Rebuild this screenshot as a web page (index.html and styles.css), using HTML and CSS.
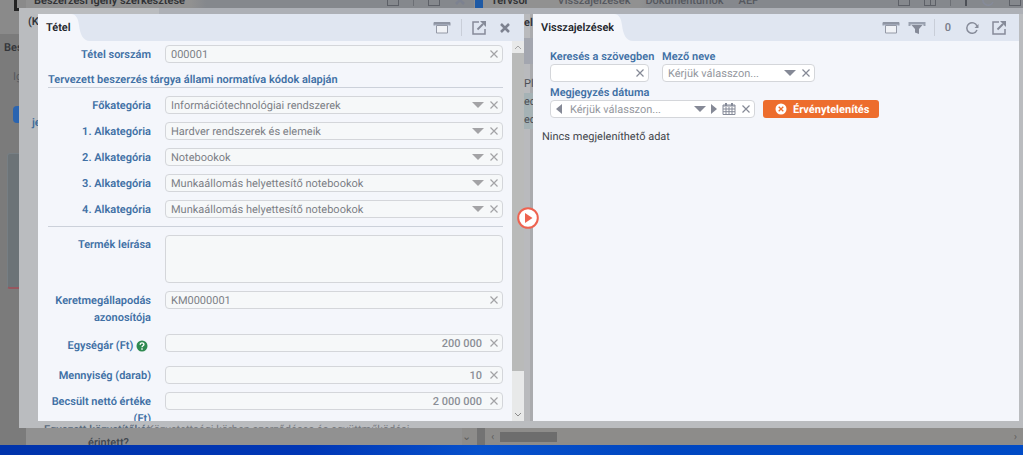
FILE: index.html
```html
<!DOCTYPE html>
<html lang="hu">
<head>
<meta charset="utf-8">
<meta name="viewport" content="width=device-width, initial-scale=1">
<title>Tétel – Visszajelzések</title>
<link rel="stylesheet" href="styles.css">
</head>
<body>
<svg class="sprite" aria-hidden="true">
  <symbol id="i-archive" viewBox="0 0 18 14"><path d="M1 4.500V1.500h16v3" fill="#b3bccd" stroke="#8f95a3"/><path d="M3.500 4.500h11v7.500h-11z" fill="#f0f2f6" stroke="#9499a6"/><path d="M1 2.500h16" stroke="#8f95a3" stroke-width="2"/></symbol>
  <symbol id="i-filter" viewBox="0 0 18 14"><path d="M.500 1h17v4h-2v-1.500h-13v1.500h-2z" fill="#9aa1b0"/><path d="M3.500 4h11L11 8v5l-4-1.500V8z" fill="#858a98"/></symbol>
  <symbol id="i-open" viewBox="0 0 16 16"><path d="M8 2H2v12h12V9" fill="none" stroke="#868b99" stroke-width="1.500"/><path d="M6.500 9.500 12 4" fill="none" stroke="#868b99" stroke-width="2"/><path d="M9 1h6v6z" fill="#868b99"/></symbol>
  <symbol id="i-close" viewBox="0 0 12 12"><path d="m2 2 8 8M10 2l-8 8" stroke="#7d8290" stroke-width="2.500"/></symbol>
  <symbol id="i-x" viewBox="0 0 10 10"><path d="m1.500 1.500 7 7m0-7-7 7" stroke="currentColor" stroke-width="1.200"/></symbol>
  <symbol id="i-down" viewBox="0 0 12 6"><path d="M0 0h12L6 6z" fill="currentColor"/></symbol>
  <symbol id="i-left" viewBox="0 0 6 10"><path d="M6 0v10L0 5z" fill="currentColor"/></symbol>
  <symbol id="i-right" viewBox="0 0 6 10"><path d="M0 0v10l6-5z" fill="currentColor"/></symbol>
  <symbol id="i-calendar" viewBox="0 0 14 12"><path d="M1 2h12v9.500H1z" fill="none" stroke="#858a98"/><path d="M1 3h12M1 6h12M1 8.700h12M4 4v7M7 4v7M10 4v7" stroke="#858a98"/><path d="M4 0v3m6-3v3" stroke="#858a98" stroke-width="2"/></symbol>
  <symbol id="i-refresh" viewBox="0 0 14 14"><path d="M12 9a5.300 5.300 0 1 1 0-4" fill="none" stroke="#868b99" stroke-width="1.500"/><path d="M13.500 3v4h-4z" fill="#868b99"/></symbol>
  <symbol id="i-tab" viewBox="0 0 24 27" preserveAspectRatio="none"><path d="M0 0c5 0 7 4 8 11 1 9 4 16 11 16H0z" fill="#f4f6fb"/></symbol>
</svg>
<div class="screen">
  <main class="desktop">
    <div class="backdrop" aria-hidden="true">
      <div class="back-strip">
        <span class="back-title">Beszerzési igény szerkesztése</span>
        <span class="back-tools"><i class="box"></i><i class="bar"></i><i class="box"></i><svg class="ic12"><use href="#i-close"/></svg></span>
      </div>
      <div class="back-strip back-strip-right">
        <i class="mark"></i><span class="back-title">Tervsor</span><span class="back-tab">Visszajelzések</span><span class="back-tab">Dokumentumok</span><span class="back-tab">AEF</span>
        <span class="back-tools"><i class="box"></i><i class="box grid"></i><i class="bar"></i><i class="bar dark"></i><svg class="ic14"><use href="#i-refresh"/></svg><i class="box"></i></span>
      </div>
      <div class="back-side"><b class="logo"></b><span class="side-label">Beszerzés</span><span class="side-field">Ig</span><i class="side-button"></i><i class="side-card"></i></div>
      <div class="back-form"><span class="back-question">érintett?</span></div>
      <div class="back-scroll"><i class="arrow-down">⌄</i><i class="split"></i><i>‹</i><b></b><i class="arrow-end">›</i></div>
    </div>
    <div class="shade" aria-hidden="true"><i class="shade-tab"></i><span class="shade-k">(K</span><span class="shade-je">je</span><span class="shade-cut">Egyezett közvetítőkér</span><span class="shade-field">Közvetettségi körben szerződéses és együttműködési</span></div>

    <div class="dialogs">
      <section class="panel">
        <header class="head">
          <h1 class="tab">Tétel</h1><svg class="curve" aria-hidden="true"><use href="#i-tab"/></svg>
          <div class="tools tools-item">
            <button type="button" aria-label="Archívum"><svg class="wide"><use href="#i-archive"/></svg></button>
            <i class="divider"></i>
            <button type="button" aria-label="Új ablak"><svg class="ic16"><use href="#i-open"/></svg></button>
            <button type="button" aria-label="Bezárás"><svg class="ic12"><use href="#i-close"/></svg></button>
          </div>
        </header>
        <div class="content">
          <form class="form">
            <div class="row"><label for="no">Tétel sorszám</label><div class="field"><input id="no" value="000001"><button type="button" aria-label="Törlés"><svg class="ic10"><use href="#i-x"/></svg></button></div></div>
            <h2 class="group">Tervezett beszerzés tárgya állami normatíva kódok alapján</h2>
            <div class="row"><label for="k0">Főkategória</label><div class="field"><select id="k0"><option>Információtechnológiai rendszerek</option></select><svg class="down"><use href="#i-down"/></svg><button type="button" aria-label="Törlés"><svg class="ic10"><use href="#i-x"/></svg></button></div></div>
            <div class="row"><label for="k1">1. Alkategória</label><div class="field"><select id="k1"><option>Hardver rendszerek és elemeik</option></select><svg class="down"><use href="#i-down"/></svg><button type="button" aria-label="Törlés"><svg class="ic10"><use href="#i-x"/></svg></button></div></div>
            <div class="row"><label for="k2">2. Alkategória</label><div class="field"><select id="k2"><option>Notebookok</option></select><svg class="down"><use href="#i-down"/></svg><button type="button" aria-label="Törlés"><svg class="ic10"><use href="#i-x"/></svg></button></div></div>
            <div class="row"><label for="k3">3. Alkategória</label><div class="field"><select id="k3"><option>Munkaállomás helyettesítő notebookok</option></select><svg class="down"><use href="#i-down"/></svg><button type="button" aria-label="Törlés"><svg class="ic10"><use href="#i-x"/></svg></button></div></div>
            <div class="row"><label for="k4">4. Alkategória</label><div class="field"><select id="k4"><option>Munkaállomás helyettesítő notebookok</option></select><svg class="down"><use href="#i-down"/></svg><button type="button" aria-label="Törlés"><svg class="ic10"><use href="#i-x"/></svg></button></div></div>
            <hr class="rule">
            <div class="row"><label for="desc">Termék leírása</label><textarea id="desc" class="area"></textarea></div>
            <div class="row"><label for="km">Keretmegállapodás azonosítója</label><div class="field"><input id="km" value="KM0000001"><button type="button" aria-label="Törlés"><svg class="ic10"><use href="#i-x"/></svg></button></div></div>
            <div class="row row-price"><label for="price">Egységár (Ft) <svg class="help" viewBox="0 0 12 12" role="img" aria-label="Súgó"><circle cx="6" cy="6" r="5.500" fill="#2f8a50"/><path d="M4.200 4.800c0-2.600 3.700-2.400 3.700-.3C7.900 5.800 6 5.700 6 7.200M6 8.300v1.400" fill="none" stroke="#fff" stroke-width="1.400"/></svg></label><div class="field num"><input id="price" value="200 000"><button type="button" aria-label="Törlés"><svg class="ic10"><use href="#i-x"/></svg></button></div></div>
            <div class="row"><label for="qty">Mennyiség (darab)</label><div class="field num"><input id="qty" value="10"><button type="button" aria-label="Törlés"><svg class="ic10"><use href="#i-x"/></svg></button></div></div>
            <div class="row"><label for="net">Becsült nettó értéke (Ft)</label><div class="field num"><input id="net" value="2 000 000"><button type="button" aria-label="Törlés"><svg class="ic10"><use href="#i-x"/></svg></button></div></div>
          </form>
          <div class="scroll" aria-hidden="true">
            <svg viewBox="0 0 12 12"><path d="m3 8 3-3 3 3" fill="none" stroke="#a5a5a5"/></svg>
            <i class="thumb"></i>
            <svg viewBox="0 0 12 12"><path d="m3 4 3 3 3-3" fill="none" stroke="#8c8c8c"/></svg>
          </div>
        </div>
      </section>

      <div class="splitter">
        <div class="peek" aria-hidden="true"><b>el</b><span class="peek-band"></span><span>Pl</span><span class="teal">ed</span><span class="teal">ed</span></div>
        <button type="button" class="toggle" aria-label="Panel összecsukása"><svg viewBox="0 0 22 22"><circle cx="11" cy="11" r="9.800" fill="#fff" stroke="#ee6350" stroke-width="2"/><path d="M8 6v10l7.500-5z" fill="#ee6350"/></svg></button>
      </div>

      <section class="panel">
        <header class="head">
          <h1 class="tab">Visszajelzések</h1><svg class="curve" aria-hidden="true"><use href="#i-tab"/></svg>
          <div class="tools tools-feedback">
            <button type="button" aria-label="Archívum"><svg class="wide"><use href="#i-archive"/></svg></button>
            <button type="button" aria-label="Szűrő"><svg class="wide"><use href="#i-filter"/></svg></button>
            <i class="divider"></i>
            <span class="count">0</span>
            <button type="button" aria-label="Frissítés"><svg class="ic14"><use href="#i-refresh"/></svg></button>
            <button type="button" aria-label="Új ablak"><svg class="ic16"><use href="#i-open"/></svg></button>
          </div>
        </header>
        <div class="feedback">
          <form class="filters">
            <div class="filter filter-text"><label for="q">Keresés a szövegben</label><div class="field light"><input id="q"><button type="button" aria-label="Törlés"><svg class="ic10"><use href="#i-x"/></svg></button></div></div>
            <div class="filter filter-name"><label for="fn">Mező neve</label><div class="field light"><select id="fn"><option>Kérjük válasszon...</option></select><svg class="down"><use href="#i-down"/></svg><button type="button" aria-label="Törlés"><svg class="ic10"><use href="#i-x"/></svg></button></div></div>
            <div class="filter filter-date"><label for="dt">Megjegyzés dátuma</label><div class="field light"><button type="button" class="prev" aria-label="Előző"><svg class="side"><use href="#i-left"/></svg></button><select id="dt"><option>Kérjük válasszon...</option></select><svg class="down"><use href="#i-down"/></svg><button type="button" aria-label="Következő"><svg class="side"><use href="#i-right"/></svg></button><button type="button" aria-label="Naptár"><svg class="cal"><use href="#i-calendar"/></svg></button><button type="button" aria-label="Törlés"><svg class="ic10"><use href="#i-x"/></svg></button></div></div>
            <button type="button" class="reset"><svg viewBox="0 0 12 12"><circle cx="6" cy="6" r="5.500" fill="#fff"/><path d="m3.700 3.700 4.600 4.600m0-4.600L3.700 8.300" stroke="#ed6d2d" stroke-width="1.300"/></svg>Érvénytelenítés</button>
          </form>
          <p class="empty">Nincs megjeleníthető adat</p>
        </div>
      </section>
    </div>
  </main>
  <footer class="taskbar"></footer>
</div>
</body>
</html>
```

FILE: styles.css
```css
* { box-sizing: border-box; }
body { margin: 0; font: 11px/17px Roboto, "Noto Sans", sans-serif; color: #3c4048; text-rendering: geometricPrecision; }
button { border: 0; padding: 0; background: none; font: inherit; color: inherit; text-rendering: inherit; display: flex; align-items: center; justify-content: center; }
svg { flex: none; }
.sprite { position: absolute; width: 0; height: 0; }
.ic10 { width: 10px; height: 10px; }
.ic12 { width: 12px; height: 12px; }
.ic14 { width: 14px; height: 14px; }
.ic16 { width: 16px; height: 16px; }
.wide { width: 18px; height: 14px; }
.down { width: 12px; height: 6px; }
.side { width: 6px; height: 10px; }
.cal { width: 14px; height: 12px; }

.screen { display: flex; flex-direction: column; height: 100vh; overflow: hidden; }
.desktop { position: relative; flex: 1; min-height: 0; display: flex; background: #7b7b7b; }
.taskbar { height: 10px; background: linear-gradient(90deg, #0033ab, #0036b5 30%, #0751cc 47%, #0046c0 65%, #004bc6); }

/* Windows behind the open dialogs */
.backdrop { position: absolute; inset: 0; overflow: hidden; }
.back-strip { position: absolute; top: 0; left: 26px; right: 50%; height: 8px; padding: 0 46px 0 8px; display: flex; align-items: center; background: linear-gradient(90deg, #919191 165px, #85888d 180px); overflow: hidden; }
.back-strip-right { left: 474px; right: 0; padding: 0 2px 0 1px; }
.back-title { line-height: 12px; margin-top: -7px; font-weight: 600; color: #303135; }
.back-tab { margin: -7px 0 0 15px; line-height: 12px; font-weight: 500; color: #55585f; }
.back-strip-right .back-title { margin-right: 14px; margin-left: 8px; }
.back-tools { margin-left: auto; margin-top: -8px; display: flex; gap: 14px; align-items: center; }
.box { width: 12px; height: 12px; border: 1px solid #5d6067; }
.bar { width: 1px; height: 12px; background: #6c6f75; }
.dark { width: 2px; background: #4d5057; }
.grid { background: linear-gradient(90deg, transparent 5px, #5d6067 5px 6px, transparent 6px); }
.mark { width: 8px; height: 8px; background: #1f5aa5; }
.back-side { position: absolute; top: 0; bottom: 0; left: 0; width: 26px; background: linear-gradient(#8a8a8a 34px, #7b7b7b 34px); }
.logo { position: absolute; left: 14px; top: 0; width: 6px; height: 11px; border-left: 3px solid #222; border-bottom: 3px solid #222; }
.side-label { position: absolute; left: 4px; top: 39px; font-weight: 600; color: #34363a; }
.side-field { position: absolute; left: 13px; top: 68px; color: #55585e; }
.side-button { position: absolute; left: 13px; top: 106px; width: 20px; height: 17px; border-radius: 4px; background: #2a64b0; }
.side-card { position: absolute; left: 7px; top: 153px; width: 20px; height: 136px; border: 1px solid #777f84; border-bottom: 2px solid #96565e; border-radius: 3px; background: #6c7377; }
.back-form { position: absolute; left: 26px; right: 50%; bottom: 0; height: 24px; background: #919191; color: #41474f; font-weight: 500; }
.back-question { position: absolute; left: 62px; bottom: -6px; }
.back-scroll { position: absolute; left: 462px; right: 0; bottom: 0; height: 17px; display: flex; align-items: center; gap: 6px; background: #8d8c8a; color: #5d5d5d; }
.back-scroll i { font-style: normal; }
.back-scroll b { width: 57px; height: 10px; background: #6d6d6d; }
.back-scroll .arrow-down { width: 9px; }
.back-scroll .split { width: 8px; height: 17px; background: #737373; }
.back-scroll .arrow-end { margin-left: auto; margin-right: 6px; }

.shade { position: absolute; top: 8px; right: 0; bottom: 17px; left: 19px; overflow: hidden; background: #babcbf; }
.shade-tab { position: absolute; top: 0; left: 140px; right: 0; height: 6px; background: #adb0b6; }
.shade-k { position: absolute; left: 9px; top: 5px; font-weight: 600; color: #33363b; }
.shade-je { position: absolute; left: 13px; top: 106px; font-weight: 600; color: #3f6d9b; }
.shade-cut { position: absolute; left: 25px; bottom: -10px; font-weight: 600; color: #596a7c; }
.shade-field { position: absolute; left: 128px; bottom: -10px; color: #777a80; }

/* Dialog pair */
.dialogs { position: relative; flex: 1; min-width: 0; display: flex; padding: 14px 4px 24px 38px; }
.panel { flex: 1 1 0; min-width: 0; display: flex; flex-direction: column; background: #f4f6fb; overflow: hidden; }
.head { display: flex; flex: none; height: 27px; background: #e0e6f1; }
.tab { margin: 0; padding: 0 0 0 8px; font-size: 11px; line-height: 28px; font-weight: 600; color: #22252b; background: #f4f6fb; }
.curve { width: 24px; height: 27px; }
.tools { margin-left: auto; display: flex; align-items: center; }
.tools-item { gap: 9px; padding-right: 13px; }
.tools-item .divider { margin-left: 2px; }
.tools-item button:first-child { margin-right: 0; }
.tools-item button:last-child { margin-left: 3px; }
.tools-feedback { gap: 8px; padding-right: 12px; }
.tools-feedback button:last-child { margin-left: 4px; }
.divider { width: 1px; height: 17px; background: #c9ced8; }
.tools-item .divider { margin: 0 0 0 1px; }
.count { width: 10px; margin-right: 4px; text-align: center; font-weight: 600; color: #7b808d; }

.content { flex: 1; min-height: 0; display: flex; overflow: hidden; }
.form { flex: 1; min-width: 0; display: flex; flex-direction: column; gap: 8px; padding: 4px 9px 0 10px; }
.row { flex: none; display: grid; grid-template-columns: 103px 1fr; column-gap: 14px; align-items: start; }
.row label { text-align: right; padding-top: 1px; }
label, .group { font-size: 11px; line-height: 17px; font-weight: 600; color: #4070a5; }
.row:last-child { height: 18px; }
.row-price { min-height: 24px; }
.row .help { margin-right: 3px; }
.row-price label { padding-top: 3px; }
.help { width: 12px; height: 12px; vertical-align: -3px; }
.group { flex: none; margin: 0; padding-top: 2px; border-bottom: 1px solid #ccd1da; line-height: 14px; white-space: nowrap; }
.rule { flex: none; width: 100%; height: 1px; margin: 0; border: 0; background: #ccd1da; }
.field { display: flex; align-items: center; gap: 5px; height: 18px; padding: 0 3px 0 5px; border: 1px solid #d4d6da; border-radius: 4px; background: #f6f8f9; color: #a3a3a6; }
.field input, .field select { flex: 1; min-width: 0; width: 0; height: 16px; padding: 0; border: 0; outline: 0; background: none; appearance: none; font: inherit; text-rendering: inherit; color: #7c7f86; }
.field.num input { text-align: right; font-weight: 500; color: #8b8e96; }
.num { gap: 7px; }
.area { width: 100%; height: 48px; display: block; border: 1px solid #d4d6da; border-radius: 4px; background: #f6f8f9; resize: none; }
.field.light { background: #fff; color: #858996; }
.field.light select { color: #94979e; }
.scroll { flex: none; width: 12px; display: flex; flex-direction: column; background: #e8e9e9; }
.scroll svg { width: 12px; height: 12px; }
.thumb { flex: 1; margin-bottom: 38px; background: #b9bab9; }

.splitter { position: relative; flex: none; width: 9px; background: linear-gradient(90deg, #b9babd 6px, #aaabae 6px); }
.peek { height: 100%; overflow: hidden; color: #4c4f55; }
.peek span, .peek b { display: block; height: 18px; }
.peek b { color: #303238; font-weight: 600; }
.peek .peek-band { height: 26px; margin: 6px 0 11px; background: #a3a6af; }
.peek .teal { background: #a5b2b5; }
.toggle { position: absolute; top: 50%; left: -7px; width: 22px; height: 22px; margin-top: -11px; }
.toggle svg { width: 22px; height: 22px; }

.feedback { padding: 8px 9px; }
.filters { display: flex; flex-wrap: wrap; align-items: flex-end; gap: 3px 8px; padding-left: 8px; }
.filter label { display: block; line-height: 15px; white-space: nowrap; }
.filter-text { width: 99px; margin-right: 5px; }
.filter-name { width: 153px; margin-right: 100px; }
.filter-date { width: 205px; }
.filter-date .prev { margin-right: 3px; }
.reset { gap: 6px; height: 18px; padding: 0 10px 0 12px; border-radius: 3px; background: #ed6d2d; color: #fff; font-weight: 700; font-size: 11px; }
.reset svg { width: 12px; height: 12px; }
.empty { margin: 10px 0 0; color: #43464c; }
```
